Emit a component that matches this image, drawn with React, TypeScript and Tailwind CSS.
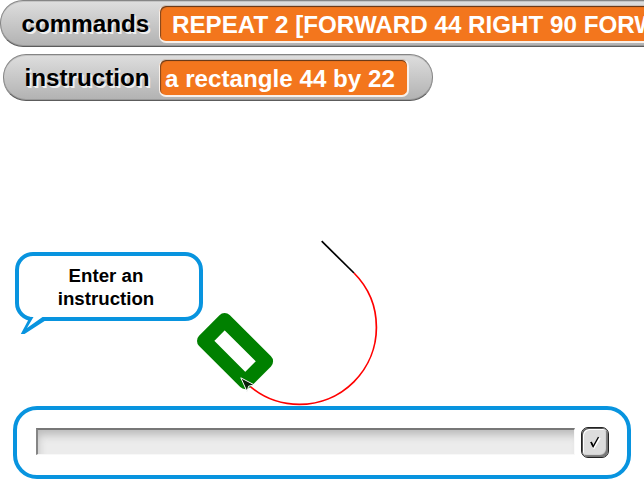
import React from "react";

type WatcherProps = {
  label: string;
  value: string;
  className: string;
  labelClass: string;
  valueClass: string;
};

function Watcher({ label, value, className, labelClass, valueClass }: WatcherProps) {
  return (
    <div
      className={`flex h-[47px] shrink-0 items-start rounded-[23px] border border-[#858585] border-b-[#5c5c5c] bg-linear-to-b from-[#dedede] to-[#b2b2b2] text-[24.2px] font-bold whitespace-nowrap shadow-[inset_0_1px_0_#c4c4c4,inset_0_-1px_0_#999] ${className}`}
    >
      <span
        className={`shrink-0 leading-8 text-black [text-shadow:1px_1px_0_#eee,2px_2px_0_#eee] ${labelClass}`}
      >
        {label}
      </span>
      <span
        className={`mt-[4px] h-[38px] shrink-0 rounded-[7px] border-r-2 border-b-2 border-l border-t border-[#f8f0ea] border-t-[#c9c0ba] bg-[#f3761d] pt-[3px] leading-8 text-white shadow-[inset_0_1px_0_#6b3a18,inset_1px_1px_1px_#80451c] ${valueClass}`}
      >
        {value}
      </span>
    </div>
  );
}

function Drawing() {
  return (
    <svg className="absolute inset-0" width="644" height="483" viewBox="0 0 644 483" fill="none">
      <path d="M321.7 241.2 354 273" stroke="#000" strokeWidth="1.7" />
      <path
        d="M354 273A77 77 0 0 1 376.4 327.5A77 77 0 0 1 299.5 404.4A77 77 0 0 1 245.3 382"
        stroke="#f00"
        strokeWidth="1.7"
      />
      <path
        d="M224.6 320.2 265.9 361.3 245.3 382 204.2 340.9Z"
        stroke="#008000"
        strokeWidth="14.4"
        strokeLinejoin="round"
      />
      <path
        d="M240.8 377.8 254.2 384.8 248.6 386.2 247 391.5Z"
        fill="#082008"
        stroke="#fff"
        strokeWidth="1"
      />
    </svg>
  );
}

function SpeechBubble() {
  return (
    <div className="relative mt-[151px] ml-[15px] h-[69px] w-[188px] shrink-0 rounded-[18px] border-4 border-[#0894df] bg-white pt-[8px] pr-[6px] text-center text-[18.7px] leading-[23px] font-bold text-black">
      Enter an
      <br />
      instruction
      <svg className="absolute top-[58px] left-0" width="32" height="24" viewBox="0 0 32 24">
        <path d="M11 3 6 17 24 5.5V2.5H11Z" fill="#fff" />
        <path d="M9 6.5 1.8 20H5.5L26 6.8V3H23.5L8 14 14.5 3H9Z" fill="#0894df" />
      </svg>
    </div>
  );
}

function Prompt() {
  return (
    <div className="relative mt-[85px] ml-[13px] flex h-[73px] w-[618px] shrink-0 rounded-[24px] border-4 border-[#0894df] bg-white">
      <input
        aria-label="Instruction"
        className="mt-[18px] ml-[19px] h-[27px] w-[539px] rounded-none border-t-2 border-r border-b border-l-2 border-t-[#777] border-r-[#fafafa] border-b-[#f8f8f8] border-l-[#858585] bg-[#ececec] px-1 shadow-[inset_3px_8px_9px_-3px_#bbb] outline-none"
      />
      <button
        aria-label="Accept"
        className="mt-[17px] ml-[6px] flex h-[31px] w-[28px] items-center justify-center rounded-[7px] border border-[#222] bg-[#dddddd] shadow-[inset_1px_1px_0_#555,inset_2px_2px_0_#fff,inset_-2px_-2px_1px_#777]"
      >
        <svg className="-mt-[2px]" width="12" height="14" viewBox="0 0 12 14" fill="none">
          <path d="M3 9 5 13 11 3" stroke="#fff" strokeWidth="1.5" />
          <path d="M2 7 4.2 11.5 9.5 2" stroke="#000" strokeWidth="1.3" />
          <path d="M2 7 4.2 11.5" stroke="#000" strokeWidth="1.7" />
        </svg>
      </button>
    </div>
  );
}

export default function App() {
  return (
    <main className="relative flex h-[483px] w-[644px] flex-col overflow-hidden bg-white font-['Liberation_Sans',Arial,sans-serif]">
      <Watcher
        label="commands"
        value="REPEAT 2 [FORWARD 44 RIGHT 90 FORWARD"
        className="w-[820px]"
        labelClass="w-[158px] pl-[20.5px] pt-[7px]"
        valueClass="w-[640px] pl-[12px]"
      />
      <Watcher
        label="instruction"
        value="a rectangle 44 by 22"
        className="mt-[7px] ml-[3px] w-[430px]"
        labelClass="w-[155px] pl-[20.5px] pt-[7px]"
        valueClass="w-[250px] pl-[5px]"
      />
      <SpeechBubble />
      <Drawing />
      <Prompt />
    </main>
  );
}
